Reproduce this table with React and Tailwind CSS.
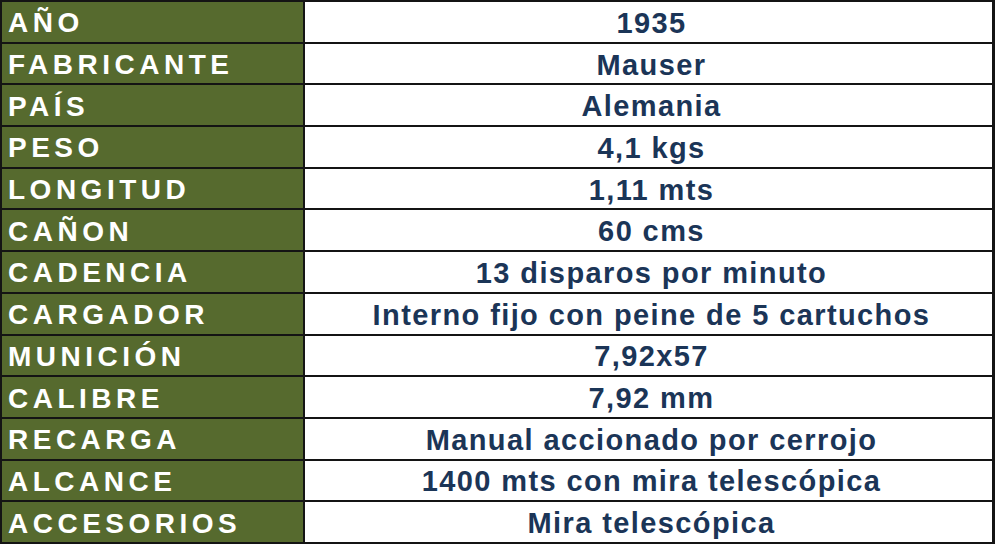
import React from 'react';

const rows = [
  ['AÑO', '1935'],
  ['FABRICANTE', 'Mauser'],
  ['PAÍS', 'Alemania'],
  ['PESO', '4,1 kgs'],
  ['LONGITUD', '1,11 mts'],
  ['CAÑON', '60 cms'],
  ['CADENCIA', '13 disparos por minuto'],
  ['CARGADOR', 'Interno fijo con peine de 5 cartuchos'],
  ['MUNICIÓN', '7,92x57'],
  ['CALIBRE', '7,92 mm'],
  ['RECARGA', 'Manual accionado por cerrojo'],
  ['ALCANCE', '1400 mts con mira telescópica'],
  ['ACCESORIOS', 'Mira telescópica'],
];

const App = () => {
  return (
    <div className="w-[996px] h-[544px] bg-white overflow-hidden">
      <div
        className="w-[995px] h-[544px] flex flex-col gap-[2px] p-[2px] pr-[3px] bg-[#141414]"
        style={{ fontFamily: '"Liberation Sans", Arial, sans-serif' }}
      >
        {rows.map(([label, value]) => (
          <div key={label} className="flex-1 grid grid-cols-[301px_1fr] gap-[2px]">
            <div className="bg-[#566a2e] text-white font-bold text-[28px] tracking-[4.5px] pl-[6px] pt-[3px] flex items-center leading-none">
              {label}
            </div>
            <div className="bg-white text-[#1b3557] font-bold text-[29px] tracking-[1.4px] pl-[6px] pt-[3px] flex items-center justify-center leading-none">
              {value}
            </div>
          </div>
        ))}
      </div>
    </div>
  );
};

export default App;
